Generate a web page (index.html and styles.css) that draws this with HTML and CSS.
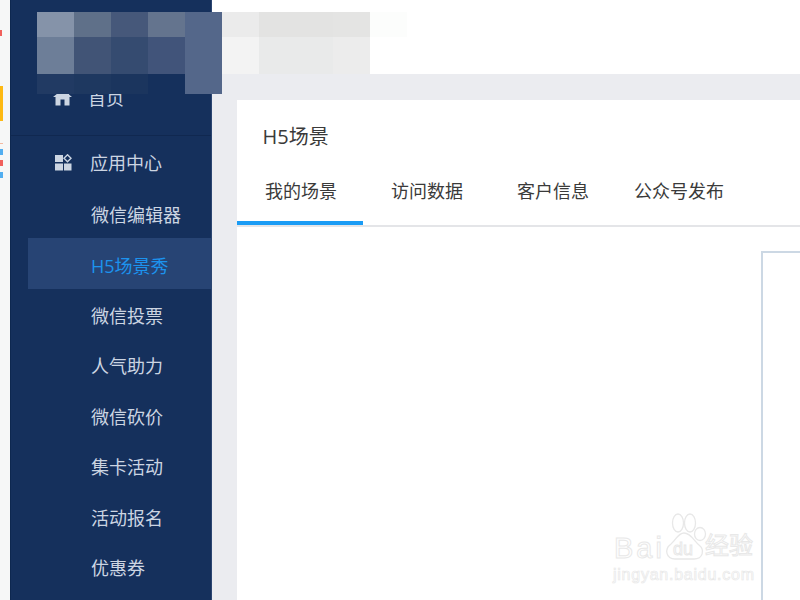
FILE: index.html
```html
<!DOCTYPE html>
<html lang="zh">
<head>
<meta charset="utf-8">
<title>H5场景</title>
<link rel="stylesheet" href="styles.css">
</head>
<body>
<div class="app">
  <div class="edge">
    <i class="mark mark-red-top"></i>
    <i class="mark mark-yellow"></i>
    <i class="mark mark-orange"></i>
    <i class="mark mark-blue"></i>
    <i class="mark mark-red"></i>
    <i class="mark mark-blue"></i>
  </div>
  <aside class="sidebar">
    <div class="home">
      <a class="nav-head nav-home">
        <svg class="nav-icon" viewBox="0 0 19 16"><path d="M9.5 0 0 7.5h2.5V16H7.5v-6h4v6h5V7.5H19L16 5V1h-3v1.6z" fill="#ccd5e2"/></svg>
        <span>首页</span>
      </a>
    </div>
    <nav class="group">
      <a class="nav-head">
        <svg class="nav-icon" viewBox="0 0 19 17"><path d="M2 1h8v7H2zM2 9.500h8v7H2zM11 9.500h7.500v7H11z" fill="#ccd5e2"/><path d="M14.500 0.800 18 4.300 14.500 7.800 11 4.300z" fill="none" stroke="#ccd5e2" stroke-width="1.400"/></svg>
        <span>应用中心</span>
      </a>
      <a class="nav-item">微信编辑器</a>
      <a class="nav-item active">H5场景秀</a>
      <a class="nav-item">微信投票</a>
      <a class="nav-item">人气助力</a>
      <a class="nav-item">微信砍价</a>
      <a class="nav-item">集卡活动</a>
      <a class="nav-item">活动报名</a>
      <a class="nav-item">优惠券</a>
    </nav>
  </aside>
  <main class="main">
    <header class="topbar"></header>
    <section class="card">
      <h1 class="title">H5场景</h1>
      <div class="tabs">
        <a class="tab active">我的场景</a>
        <a class="tab">访问数据</a>
        <a class="tab">客户信息</a>
        <a class="tab">公众号发布</a>
      </div>
      <div class="panel"><div class="preview"></div></div>
    </section>
  </main>
  <svg class="mosaic" width="370" height="82" viewBox="0 0 370 82" shape-rendering="crispEdges">
    <rect x="0" y="0" width="37" height="25" fill="#8593a9"/>
    <rect x="37" y="0" width="37" height="25" fill="#5f7089"/>
    <rect x="74" y="0" width="37" height="25" fill="#46587a"/>
    <rect x="111" y="0" width="37" height="25" fill="#64748e"/>
    <rect x="148" y="0" width="37" height="82" fill="#54678a"/>
    <rect x="185" y="0" width="37" height="25" fill="#ebebeb"/>
    <rect x="222" y="0" width="74" height="25" fill="#e3e3e2"/>
    <rect x="296" y="0" width="37" height="25" fill="#e4e4e3"/>
    <rect x="333" y="0" width="37" height="25" fill="#fcfdfc"/>
    <rect x="0" y="25" width="37" height="37" fill="#6d7e98"/>
    <rect x="37" y="25" width="37" height="37" fill="#415476"/>
    <rect x="74" y="25" width="37" height="37" fill="#354b70"/>
    <rect x="111" y="25" width="37" height="37" fill="#41547a"/>
    <rect x="185" y="25" width="37" height="37" fill="#f3f3f3"/>
    <rect x="222" y="25" width="74" height="37" fill="#e9eaea"/>
    <rect x="296" y="25" width="37" height="37" fill="#ececec"/>
    <rect x="0" y="62" width="37" height="20" fill="#213a63"/>
    <rect x="37" y="62" width="37" height="20" fill="#1e3860"/>
    <rect x="74" y="62" width="37" height="20" fill="#1b355e"/>
  </svg>
  <div class="watermark">
    <span class="wm-bai">Bai</span>
    <svg class="wm-paw" width="44" height="48" viewBox="0 0 44 48" fill="#fff" stroke="#e8e8e8" stroke-width="1.300">
      <ellipse cx="15" cy="10" rx="5.500" ry="9"/>
      <ellipse cx="27" cy="10" rx="5.500" ry="9"/>
      <ellipse cx="37" cy="21" rx="5.500" ry="6.500"/>
      <path d="M21 20C15 20 13 27 8 31 1 36 3 46 12 46 18 46 25 46 31 46 40 46 42 37 36 32 31 28 28 20 21 20z"/>
    </svg>
    <span class="wm-du">du</span>
    <span class="wm-jy">经验</span>
    <span class="wm-url">jingyan.baidu.com</span>
  </div>
</div>
</body>
</html>
```
FILE: styles.css
```css
* { box-sizing: border-box; }
html, body { margin: 0; height: 100%; overflow: hidden; }
body { font-family: "Open Sans", "Noto Sans CJK SC", sans-serif; background: #fff; }
.app { position: relative; display: flex; width: 800px; height: 600px; overflow: hidden; }
.edge { width: 10px; flex: none; background: #f6f7f7; display: flex; flex-direction: column; align-items: flex-start; padding-top: 30px; }
.mark { display: block; width: 3px; }
.mark-red-top { width: 2px; height: 6px; background: #f0605c; margin-bottom: 50px; }
.mark-yellow { height: 35px; background: #fdb913; margin-bottom: 22px; }
.mark-orange { height: 1px; background: #f3b9a0; margin-bottom: 5px; }
.mark-blue { height: 6px; background: #52aef0; margin-bottom: 5px; }
.mark-red { height: 6px; background: #f0605c; margin-bottom: 6px; }
.sidebar { width: 202px; flex: none; background: #15305c; border-left: 1px solid #0e2850; border-right: 1px solid #2c4672; }
.home { height: 136px; padding-top: 74px; border-bottom: 1px solid #102850; }
.nav-head { display: flex; align-items: center; height: 50px; padding: 0 0 2px 42px; color: #ccd5e2; font-size: 18px; gap: 18px; }
.nav-home { gap: 16px; padding: 0 0 4px 42px; }
.nav-icon { width: 19px; height: 17px; flex: none; }
.group { padding-top: 2px; }
.nav-item { display: flex; align-items: center; height: 50.4px; margin-left: 17px; padding: 2px 0 0 63px; color: #ccd5e2; font-size: 18px; }
.nav-item.active { background: #274474; color: #1c93ee; }
.main { flex: 1; min-width: 0; display: flex; flex-direction: column; background: #ebecf0; }
.topbar { height: 74px; flex: none; background: #fff; }
.card { flex: 1; margin: 26px 0 0 25px; background: #fff; display: flex; flex-direction: column; min-height: 0; }
.title { margin: 0; height: 73px; padding: 22px 0 0 25.5px; font-size: 20px; font-weight: 400; line-height: 30px; color: #3a3a3a; }
.tabs { display: flex; height: 54px; flex: none; border-bottom: 2px solid #e4e5e8; }
.tab { width: 126px; height: 52px; padding: 4px 0 0 2px; text-align: center; font-size: 18px; line-height: 28px; color: #3a3a3a; }
.tab.active { border-bottom: 4px solid #1a9cf5; }
.panel { flex: 1; padding: 24px 0 0 524px; min-height: 0; }
.preview { height: 100%; border-top: 2px solid #ccd8e4; border-left: 2px solid #ccd8e4; }
.mosaic { position: absolute; left: 37px; top: 12px; }
.watermark { position: absolute; left: 613px; top: 513px; width: 145px; height: 72px; }
.wm-bai, .wm-du, .wm-jy, .wm-url { position: absolute; font-family: "Liberation Sans", "Noto Sans CJK SC", sans-serif; -webkit-text-stroke: 1px #e8e8e8; color: #fff; white-space: nowrap; }
.wm-bai { left: 1px; top: 20px; font-size: 29px; line-height: 30px; letter-spacing: 3px; }
.wm-paw { position: absolute; left: 50px; top: 0; }
.wm-du { left: 60px; top: 27px; font-size: 18px; line-height: 18px; }
.wm-jy { left: 92px; top: 19px; font-size: 24px; line-height: 28px; }
.wm-url { left: 0; top: 52px; font-size: 16px; line-height: 20px; letter-spacing: 0.75px; -webkit-text-stroke-width: 0.7px; }
```
